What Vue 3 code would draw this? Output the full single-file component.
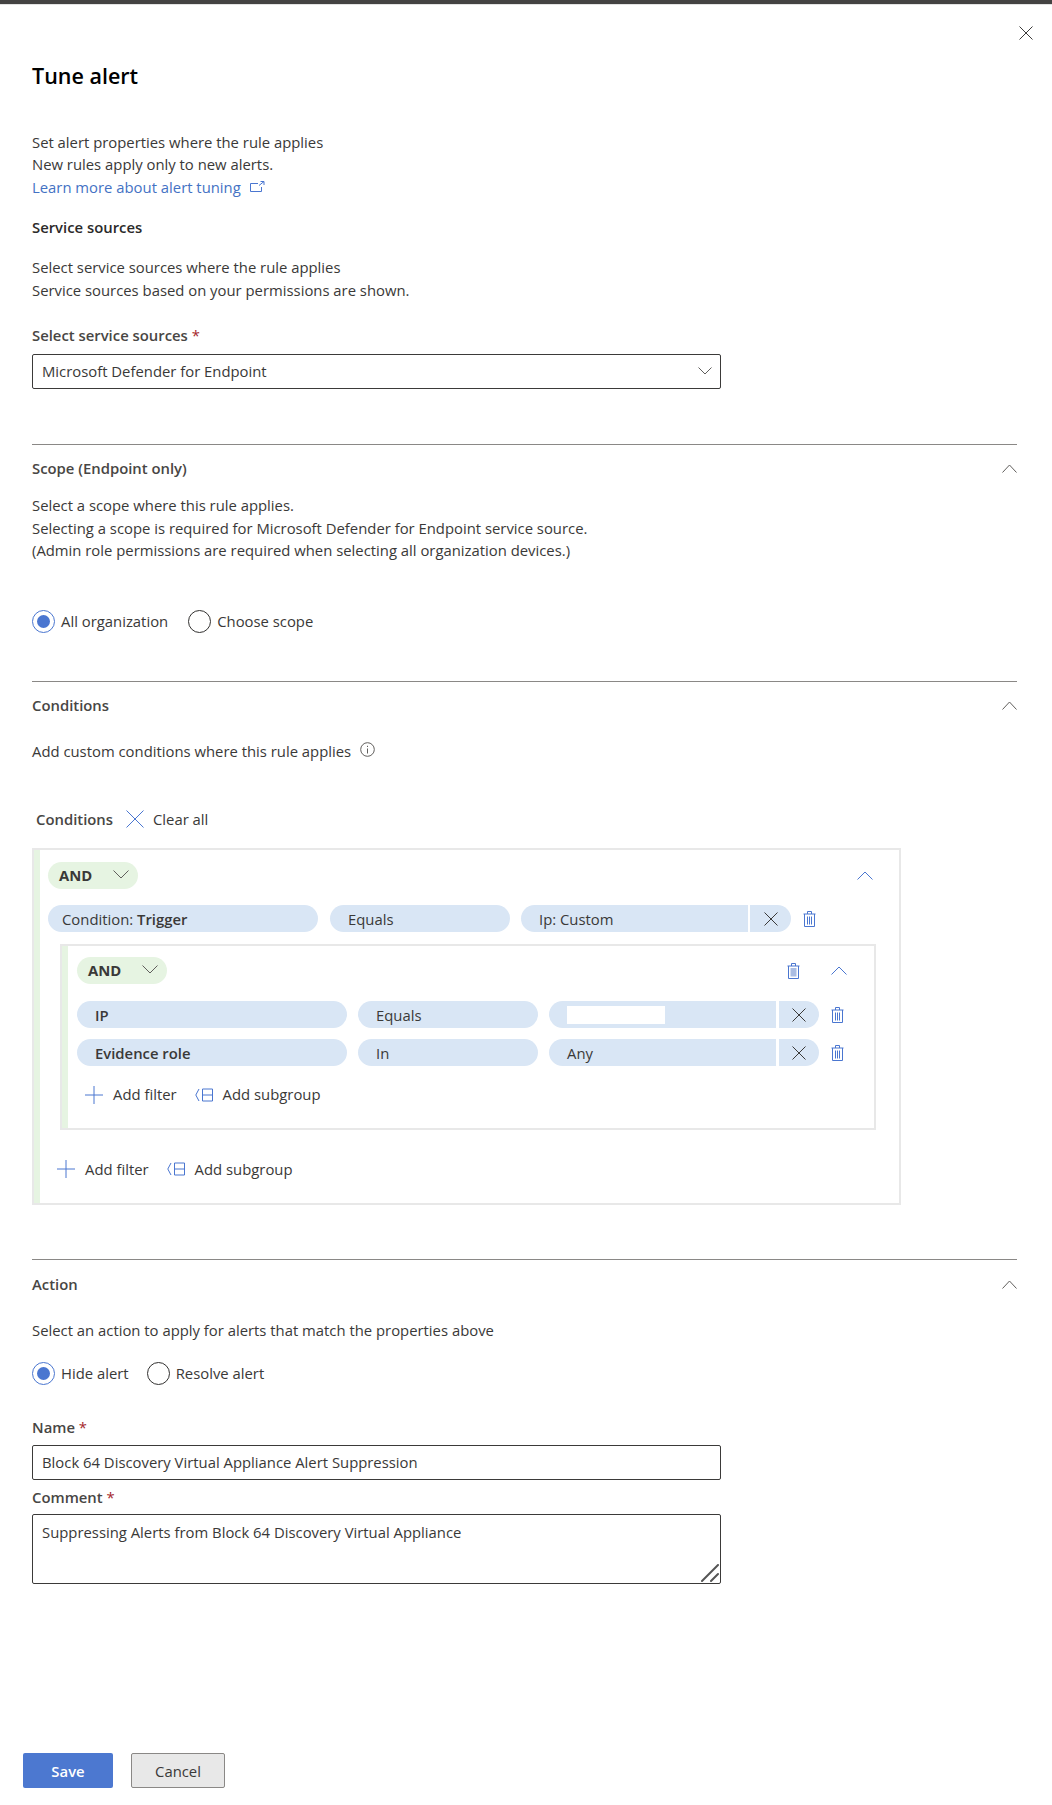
<script setup>
const radiosScope = [
  { label: 'All organization', on: true },
  { label: 'Choose scope', on: false }
]
const radiosAction = [
  { label: 'Hide alert', on: true },
  { label: 'Resolve alert', on: false }
]
</script>

<template>
  <div class="page">
    <div class="topbar"></div>
    <div class="close-row">
      <svg width="14" height="14" viewBox="0 0 14 14" class="ic-dark"><path d="M.5.5l13 13M13.5.5l-13 13" /></svg>
    </div>
    <main class="body">
      <h1 class="title">Tune alert</h1>
      <div class="para intro">
        <div>Set alert properties where the rule applies</div>
        <div>New rules apply only to new alerts.</div>
        <a class="link">Learn more about alert tuning
          <svg width="15" height="12" viewBox="0 0 15 12" class="ic-blue link-ic"><path d="M8 2.500H.5v8h11V6M9 4.500l5-4M10.500.5H14V4" /></svg>
        </a>
      </div>
      <div class="strong s-head">Service sources</div>
      <div class="para s-text">
        <div>Select service sources where the rule applies</div>
        <div>Service sources based on your permissions are shown.</div>
      </div>
      <div class="label s-label">Select service sources <span class="req">*</span></div>
      <div class="field select">
        <span>Microsoft Defender for Endpoint</span>
        <svg width="14" height="8" viewBox="0 0 14 8" class="ic-gray"><path d="M.5.5L7 7l6.500-6.500" /></svg>
      </div>

      <hr class="rule r-scope" />
      <div class="sec-head scope-head">
        <span class="label">Scope (Endpoint only)</span>
        <svg width="15" height="9" viewBox="0 0 15 9" class="ic-gray"><path d="M.5 8.500L7.500 1l7 7.500" /></svg>
      </div>
      <div class="para scope-text">
        <div>Select a scope where this rule applies.</div>
        <div>Selecting a scope is required for Microsoft Defender for Endpoint service source.</div>
        <div>(Admin role permissions are required when selecting all organization devices.)</div>
      </div>
      <div class="radios scope-radios">
        <div v-for="r in radiosScope" :key="r.label" class="radio-item">
          <span class="radio" :class="{ on: r.on }"></span>
          <span>{{ r.label }}</span>
        </div>
      </div>

      <hr class="rule r-cond" />
      <div class="sec-head cond-head">
        <span class="label">Conditions</span>
        <svg width="15" height="9" viewBox="0 0 15 9" class="ic-gray"><path d="M.5 8.500L7.500 1l7 7.500" /></svg>
      </div>
      <div class="cond-text">
        <span>Add custom conditions where this rule applies</span>
        <svg width="15" height="15" viewBox="0 0 15 15" class="ic-gray2 info"><circle cx="7.500" cy="7.500" r="6.800" /><path d="M7.500 6.500v5M7.500 3.800v1.200" /></svg>
      </div>
      <div class="cond-bar">
        <span class="label">Conditions</span>
        <svg width="18" height="18" viewBox="0 0 18 18" class="ic-blue clear-ic"><path d="M.5.5l17 17M17.500.5l-17 17" /></svg>
        <span>Clear all</span>
      </div>

      <section class="group outer">
        <div class="group-head outer-head">
          <div class="and"><span>AND</span>
            <svg width="16" height="9" viewBox="0 0 16 9" class="ic-gray"><path d="M.5.5L8 8l7.500-7.500" /></svg>
          </div>
          <svg width="16" height="9" viewBox="0 0 16 9" class="ic-blue"><path d="M.5 8.500L8 1l7.500 7.500" /></svg>
        </div>
        <div class="row row-top">
          <div class="pill p-field pad-s">Condition: <b>Trigger</b></div>
          <div class="pill p-op">Equals</div>
          <div class="pill-pair">
            <div class="pill-l p-val">Ip: Custom</div>
            <div class="pill-r">
              <svg width="14" height="14" viewBox="0 0 14 14" class="ic-dark"><path d="M.5.500l13 13M13.500.500l-13 13" /></svg>
            </div>
          </div>
          <svg width="13" height="16" viewBox="0 0 13 16" class="ic-trash trash"><path d="M.5 3h12M4.500 3V.5h4V3M1.500 3v12.500h10V3M4.500 5.500v8M6.500 5.500v8M8.500 5.500v8" /></svg>
        </div>

        <section class="group inner">
          <div class="group-head inner-head">
            <div class="and"><span>AND</span>
              <svg width="16" height="9" viewBox="0 0 16 9" class="ic-gray"><path d="M.5.5L8 8l7.500-7.500" /></svg>
            </div>
            <div class="inner-actions">
              <svg width="13" height="16" viewBox="0 0 13 16" class="ic-trash"><rect x="3.500" y="5" width="6" height="8.500" class="trash-fill" /><path d="M.5 3h12M4.500 3V.5h4V3M1.500 3v12.500h10V3" /></svg>
              <svg width="16" height="9" viewBox="0 0 16 9" class="ic-blue"><path d="M.5 8.500L8 1l7.500 7.500" /></svg>
            </div>
          </div>
          <div class="row row-a">
            <div class="pill p-field"><b>IP</b></div>
            <div class="pill p-op">Equals</div>
            <div class="pill-pair wide">
              <div class="pill-l p-val"><span class="redact"></span></div>
              <div class="pill-r">
                <svg width="14" height="14" viewBox="0 0 14 14" class="ic-dark"><path d="M.5.500l13 13M13.500.500l-13 13" /></svg>
              </div>
            </div>
            <svg width="13" height="16" viewBox="0 0 13 16" class="ic-trash trash"><path d="M.5 3h12M4.500 3V.5h4V3M1.500 3v12.500h10V3M4.500 5.500v8M6.500 5.500v8M8.500 5.500v8" /></svg>
          </div>
          <div class="row row-b">
            <div class="pill p-field"><b>Evidence role</b></div>
            <div class="pill p-op">In</div>
            <div class="pill-pair wide">
              <div class="pill-l p-val">Any</div>
              <div class="pill-r">
                <svg width="14" height="14" viewBox="0 0 14 14" class="ic-dark"><path d="M.5.500l13 13M13.500.500l-13 13" /></svg>
              </div>
            </div>
            <svg width="13" height="16" viewBox="0 0 13 16" class="ic-trash trash"><path d="M.5 3h12M4.500 3V.5h4V3M1.500 3v12.500h10V3M4.500 5.500v8M6.500 5.500v8M8.500 5.500v8" /></svg>
          </div>
          <div class="adds inner-adds">
            <svg width="18" height="18" viewBox="0 0 18 18" class="ic-blue"><path d="M9 0v18M0 9h18" /></svg>
            <span class="add-t">Add filter</span>
            <svg width="18" height="14" viewBox="0 0 18 14" class="ic-blue sub-ic"><path d="M4 1L.8 7 4 13M7.500 1h10v12h-10zM7.500 7h10" /></svg>
            <span class="add-t">Add subgroup</span>
          </div>
        </section>

        <div class="adds outer-adds">
          <svg width="18" height="18" viewBox="0 0 18 18" class="ic-blue"><path d="M9 0v18M0 9h18" /></svg>
          <span class="add-t">Add filter</span>
          <svg width="18" height="14" viewBox="0 0 18 14" class="ic-blue sub-ic"><path d="M4 1L.8 7 4 13M7.500 1h10v12h-10zM7.500 7h10" /></svg>
          <span class="add-t">Add subgroup</span>
        </div>
      </section>

      <hr class="rule r-action" />
      <div class="sec-head action-head">
        <span class="label">Action</span>
        <svg width="15" height="9" viewBox="0 0 15 9" class="ic-gray"><path d="M.5 8.500L7.500 1l7 7.500" /></svg>
      </div>
      <div class="action-text">Select an action to apply for alerts that match the properties above</div>
      <div class="radios action-radios">
        <div v-for="r in radiosAction" :key="r.label" class="radio-item">
          <span class="radio" :class="{ on: r.on }"></span>
          <span>{{ r.label }}</span>
        </div>
      </div>
      <div class="label name-label">Name <span class="req">*</span></div>
      <div class="field name-field">Block 64 Discovery Virtual Appliance Alert Suppression</div>
      <div class="label comment-label">Comment <span class="req">*</span></div>
      <div class="field area">
        Suppressing Alerts from Block 64 Discovery Virtual Appliance
        <svg width="18" height="18" viewBox="0 0 18 18" class="grip"><path d="M1 17L17 1M10 17l7-7" /></svg>
      </div>
    </main>
    <footer class="footer">
      <div class="btn save">Save</div>
      <div class="btn cancel">Cancel</div>
    </footer>
  </div>
</template>

<style scoped>
.page {
  width: 1052px;
  height: 1805px;
  overflow: hidden;
  background: #fff;
  color: #3a3938;
  font-family: "Open Sans", "Noto Sans", "Liberation Sans", sans-serif;
  font-size: 14.85px;
  line-height: 22px;
}
svg { fill: none; display: block; flex: none; }
.ic-dark { stroke: #3b3a39; }
.ic-gray { stroke: #605e5c; }
.ic-gray2 { stroke: #605e5c; }
.ic-blue { stroke: #4a76d0; }
.ic-trash { stroke: #4a76d0; }
.trash-fill { fill: #aabde3; stroke: none; }

.topbar { height: 4px; background: #444342; border-bottom: 1px solid #e3e3e3; }
.close-row { display: flex; justify-content: flex-end; padding: 21px 19px 0 0; }
.body { padding: 0 35px 0 32px; }
.title { margin: 22px 0 0; font-size: 21.5px; font-weight: 600; line-height: 28px; color: #000; }
.para { line-height: 22.5px; }
.intro { margin-top: 40.5px; }
.link { display: flex; align-items: center; color: #4472c4; }
.link-ic { margin-left: 9px; }
.strong { font-weight: 600; line-height: 20px; color: #2b2a29; }
.s-head { margin-top: 18.5px; }
.s-text { margin-top: 19.5px; }
.label { font-weight: 600; line-height: 20px; color: #484644; }
.s-label { margin-top: 24px; }
.req { color: #a4262c; font-weight: 400; }
.field {
  box-sizing: border-box;
  width: 689px;
  height: 35px;
  border: 1px solid #3b3a39;
  border-radius: 2px;
  padding: 0 9px 2px;
  display: flex;
  align-items: center;
}
.select { margin-top: 9px; justify-content: space-between; padding-right: 8px; }
.rule { margin: 0; border: 0; height: 1px; background: #8a8886; }
.r-scope { margin-top: 55px; }
.sec-head { display: flex; justify-content: space-between; align-items: center; height: 20px; }
.scope-head { margin-top: 13px; }
.scope-text { margin-top: 16px; }
.radios { display: flex; height: 24px; align-items: center; gap: 18px; }
.radio-item { display: flex; align-items: center; gap: 6px; }
.radio {
  box-sizing: border-box;
  width: 23px;
  height: 23px;
  border-radius: 50%;
  border: 1px solid #323130;
  display: block;
  position: relative;
}
.radio.on { border-color: #4a76d0; }
.radio.on::after {
  content: "";
  position: absolute;
  inset: 4px;
  border-radius: 50%;
  background: #4a76d0;
}
.scope-radios { margin-top: 47.5px; gap: 20px; }
.r-cond { margin-top: 48px; }
.cond-head { margin-top: 13px; }
.cond-text { margin-top: 25px; display: flex; align-items: center; }
.info { margin: -4px 0 0 9px; }
.cond-bar { margin-top: 45px; height: 24px; display: flex; align-items: center; padding-left: 4px; }
.clear-ic { margin: 0 9px 0 13px; }

.group {
  box-sizing: border-box;
  border: 2px solid #e8e8e8;
  box-shadow: inset 6px 0 0 #e6f4e2;
}
.outer { margin-top: 17px; width: 869px; height: 357px; padding: 12px 0 0 14px; }
.inner { margin: 12px 0 0 12px; width: 816px; height: 186px; padding: 11px 0 0 15px; }
.group-head { display: flex; justify-content: space-between; align-items: center; }
.outer-head { padding-right: 26px; }
.inner-head { padding-right: 27px; }
.inner-actions { display: flex; align-items: center; gap: 31px; }
.and {
  box-sizing: border-box;
  width: 90px;
  height: 27px;
  border-radius: 14px;
  background: #e6f4e2;
  font-weight: 700;
  padding: 0 9px 2px 11px;
  display: flex;
  align-items: center;
  justify-content: space-between;
}
.row { display: flex; align-items: center; }
.row-top { margin-top: 16px; }
.row-a { margin-top: 17px; }
.row-b { margin-top: 11px; }
.pill, .pill-l, .pill-r {
  box-sizing: border-box;
  height: 27px;
  background: #d9e6f5;
  display: flex;
  align-items: center;
}
.pill, .pill-l { padding-top: 1px; }
.pill { border-radius: 14px; padding-left: 18px; white-space: pre; }
.pad-s { padding-left: 14px; }
.p-field { width: 270px; }
.p-op { width: 180px; margin-left: 12px; }
.pill b { font-weight: 600; }
.pill-pair { display: flex; gap: 2px; margin-left: 11px; }
.row-a .p-op, .row-b .p-op { margin-left: 11px; }
.pill-l { width: 227px; border-radius: 14px 0 0 14px; padding-left: 18px; }
.pill-r { width: 41px; border-radius: 0 14px 14px 0; padding-left: 14px; }
.wide { gap: 3px; }
.wide .pill-r { width: 40px; padding-left: 13px; }
.redact { display: block; width: 98px; height: 18px; background: #fff; margin-top: -1px; }
.trash { margin-left: 12px; }
.adds { display: flex; align-items: center; height: 24px; }
.inner-adds { margin: 17px 0 0 8px; }
.inner-adds .add-t { padding-bottom: 2px; }
.outer-adds { margin: 27px 0 0 9px; }
.add-t { margin-left: 10px; }
.sub-ic { margin-left: 18px; }

.r-action { margin-top: 54px; }
.action-head { margin-top: 14px; }
.action-text { margin-top: 25px; }
.action-radios { margin-top: 20px; }
.name-label { margin-top: 32px; }
.name-field { margin-top: 8px; }
.comment-label { margin-top: 7px; }
.area {
  margin-top: 7px;
  height: 70px;
  align-items: flex-start;
  padding-top: 6px;
  position: relative;
}
.grip {
  position: absolute;
  right: 1px;
  bottom: 1px;
  stroke: #555;
  stroke-width: 2;
  stroke-linecap: round;
}
.footer { display: flex; gap: 18px; padding-left: 23px; margin-top: 169px; }
.btn {
  box-sizing: border-box;
  height: 35px;
  border-radius: 2px;
  display: flex;
  align-items: center;
  justify-content: center;
}
.save { width: 90px; background: #4c78d0; color: #fff; font-weight: 600; }
.cancel { width: 94px; background: #e8e8e8; border: 1px solid #8a8886; }
</style>

<style>
html, body { margin: 0; background: #fff; }
</style>
